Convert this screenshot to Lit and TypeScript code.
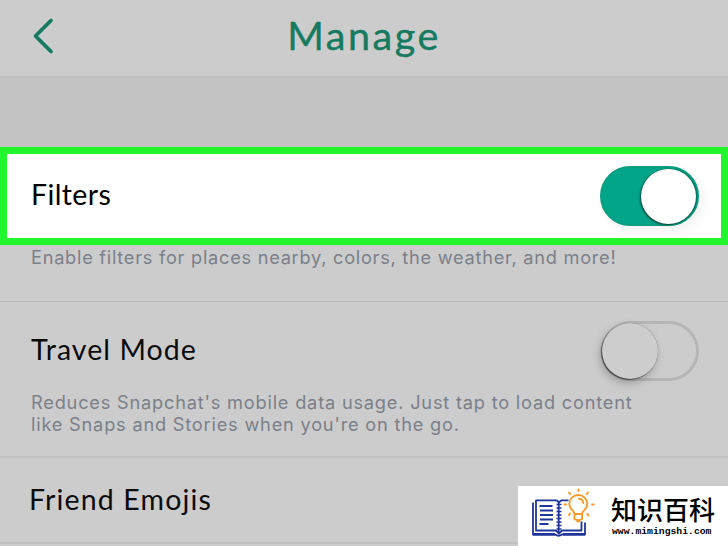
import { LitElement, html, css } from 'lit';
import { customElement, property } from 'lit/decorators.js';
import { classMap } from 'lit/directives/class-map.js';

@customElement('settings-toggle')
export class SettingsToggle extends LitElement {
  static styles = css`
    :host {
      display: block;
      flex: none;
    }
    .track {
      display: flex;
      align-items: center;
      box-sizing: border-box;
      width: 98px;
      height: 60px;
      border: 3px solid #b6b6b6;
      border-radius: 30px;
      background: transparent;
      cursor: pointer;
    }
    .track.on {
      justify-content: flex-end;
      width: 99px;
      border: 2px solid #0b9f80;
      background: #02a588;
      box-shadow: 4px 5px 12px rgba(0, 0, 0, 0.06);
    }
    .knob {
      width: 56px;
      height: 56px;
      margin-left: -2px;
      border-radius: 50%;
      background: #cdcdcd;
      box-shadow: -1px 1px 1px rgba(0, 0, 0, 0.5), 0 0 1px rgba(0, 0, 0, 0.4),
        -2px 4px 8px rgba(0, 0, 0, 0.25);
    }
    .on .knob {
      width: 55px;
      height: 55px;
      margin: 0 1px 0 0;
      background: #fff;
      box-shadow: -1px 1px 2px rgba(0, 45, 35, 0.8), 1px 0 2px rgba(0, 60, 45, 0.6);
    }
  `;

  @property({ type: Boolean }) on = false;

  private _flip() {
    this.on = !this.on;
  }

  render() {
    return html`
      <div
        class=${classMap({ track: true, on: this.on })}
        role="switch"
        aria-checked=${this.on}
        @click=${this._flip}
      >
        <div class="knob"></div>
      </div>
    `;
  }
}

@customElement('site-badge')
export class SiteBadge extends LitElement {
  static styles = css`
    :host {
      display: flex;
      box-sizing: border-box;
      width: 210px;
      height: 60px;
      padding-left: 12px;
      background: #fff;
      color: #000;
    }
    svg {
      flex: none;
      width: 68px;
      height: 60px;
    }
    .words {
      padding: 9px 0 0 13px;
    }
    .name {
      font: 500 26px/28px 'Noto Sans CJK SC', sans-serif;
      white-space: nowrap;
    }
    .site {
      padding: 4px 0 0 1px;
      font: bold 9.75px/10px 'Liberation Mono', monospace;
      white-space: nowrap;
    }
  `;

  render() {
    return html`
      <svg viewBox="530 486 68 60" fill="none" stroke-linejoin="round">
        <g stroke="#20359a" stroke-width="1.8">
          <path d="M568.500 500.300h-7l-2.500 2-2.500-2h-20.500v30.200h20l3 3 3-3h19.500v-9" />
          <path d="M533 502.500v32h22q3.500 2.500 7 0h23v-12" />
          <path d="M533 534.300h22M563 534.300h22" stroke-width="2.6" />
          <path d="M558.700 502v32" />
          <path
            d="M556.500 504.500h5M556.500 508h5M556.500 511.500h5M556.500 515h5M556.500 518.500h5M556.500 522h5M556.500 525.500h5M556.500 529h5"
            stroke-width="1.5"
          />
          <path d="M539.500 506h13M540 510.500h13M540 515h13M540 519.500h13M539.500 524h9" />
        </g>
        <g stroke="#f99b2a" stroke-width="1.9" stroke-linecap="round">
          <path d="M574.500 514c0-3.500-5.200-4.500-5.200-10a9 9 0 0 1 18 0c0 5.500-5.200 6.500-5.200 10z" />
          <path d="M574.500 514v5q3.800 2.500 7.600 0v-5M577 521q1.300 1 2.600 0" />
          <path d="M579 498.700q4 .5 4.300 4.300" />
          <path
            d="M578.500 489.500v1.500M569 492.500l1 1.600M588 492.500l-1 1.600M564.500 504.500h1.500M592 504.500h1.800M569 515l1-1.600M588.500 515.500l-1.300-1.600"
          />
        </g>
      </svg>
      <div class="words">
        <div class="name">知识百科</div>
        <div class="site">www.mimingshi.com</div>
      </div>
    `;
  }
}

@customElement('app-root')
export class AppRoot extends LitElement {
  static styles = css`
    :host {
      display: block;
      position: relative;
      width: 728px;
      height: 546px;
      overflow: hidden;
      background: #cccccc;
      font-family: Lato, sans-serif;
      color: #0b0b0b;
    }
    header {
      display: grid;
      grid-template-columns: 60px 1fr 60px;
      box-sizing: border-box;
      height: 78px;
      border-bottom: 2px solid #bdbdbd;
      color: #157a5f;
    }
    .back {
      width: 60px;
      height: 76px;
    }
    h1 {
      margin: 0;
      font-size: 39.5px;
      font-weight: 400;
      line-height: 69px;
      letter-spacing: 2.5px;
      text-align: center;
      -webkit-text-stroke: 0.4px;
    }
    .gap {
      height: 69px;
      background: #c4c4c4;
    }
    .row {
      display: flex;
      justify-content: space-between;
      box-sizing: border-box;
    }
    .title {
      font-size: 28.5px;
      line-height: 34px;
      letter-spacing: 1.05px;
      white-space: nowrap;
    }
    .highlight {
      height: 98px;
      padding: 12px 22px 0 24px;
      border: 7px solid #20f52e;
      background: #fff;
      color: #000;
    }
    .highlight .title {
      padding-top: 11px;
      letter-spacing: 0.4px;
    }
    .desc {
      font-family: Inter, sans-serif;
      font-size: 18.2px;
      line-height: 22px;
      letter-spacing: 0.74px;
      color: #7b8089;
      white-space: nowrap;
    }
    .filters-desc {
      box-sizing: border-box;
      height: 57px;
      padding: 1px 0 0 31px;
      border-bottom: 1px solid #b7b7b7;
    }
    .travel {
      box-sizing: border-box;
      height: 156px;
      border-bottom: 2px solid #c3c3c3;
    }
    .travel .row {
      height: 89px;
      padding: 19px 29px 0 31px;
    }
    .travel .title {
      padding-top: 11px;
    }
    .travel .desc {
      padding-left: 31px;
      letter-spacing: 0.8px;
    }
    .friends {
      height: 86px;
      padding: 24px 0 0 29px;
      border-bottom: 2px solid #c1c1c1;
    }
    .friends .title {
      letter-spacing: 1.15px;
    }
    site-badge {
      position: absolute;
      right: 0;
      bottom: 0;
    }
  `;

  render() {
    return html`
      <header>
        <svg class="back" viewBox="0 0 60 76" fill="none" stroke="#157a5f">
          <path d="M51 20.500 35.500 36 51 51.500" stroke-width="3.8" stroke-linecap="round" stroke-linejoin="round" />
        </svg>
        <h1>Manage</h1>
      </header>
      <div class="gap"></div>
      <div class="row highlight">
        <div class="title">Filters</div>
        <settings-toggle on></settings-toggle>
      </div>
      <div class="desc filters-desc">
        Enable filters for places nearby, colors, the weather, and more!
      </div>
      <div class="travel">
        <div class="row">
          <div class="title">Travel Mode</div>
          <settings-toggle></settings-toggle>
        </div>
        <div class="desc">
          Reduces Snapchat's mobile data usage. Just tap to load content<br />
          like Snaps and Stories when you're on the go.
        </div>
      </div>
      <div class="row friends">
        <div class="title">Friend Emojis</div>
      </div>
      <site-badge></site-badge>
    `;
  }
}
